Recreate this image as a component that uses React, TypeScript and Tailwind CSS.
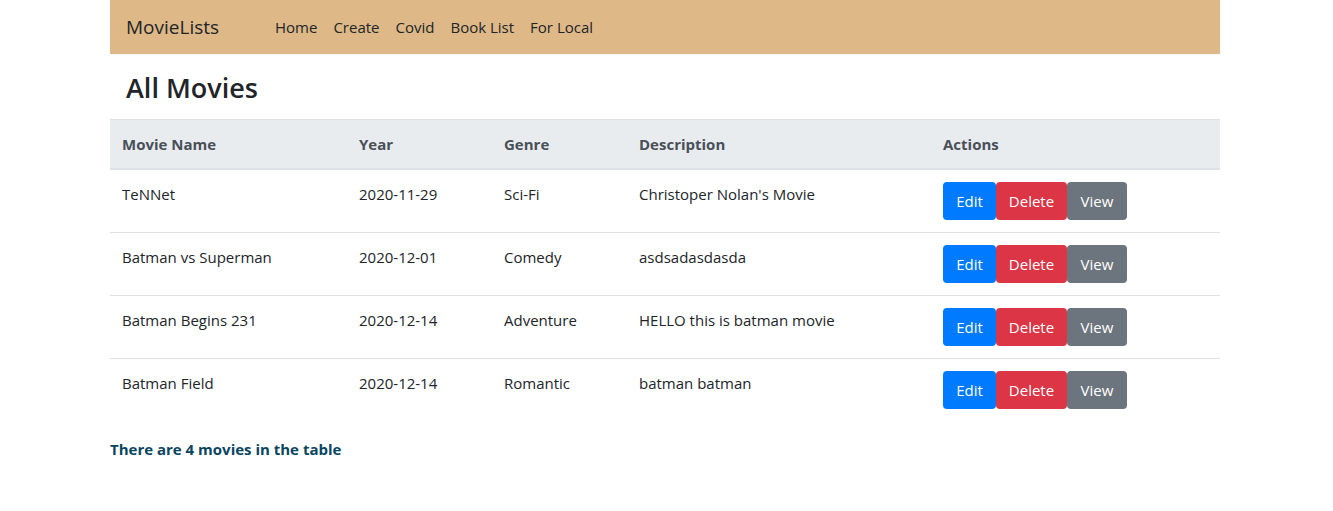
import React from "react";

const movies = [
  { name: "TeNNet", year: "2020-11-29", genre: "Sci-Fi", desc: "Christoper Nolan's Movie" },
  { name: "Batman vs Superman", year: "2020-12-01", genre: "Comedy", desc: "asdsadasdasda" },
  { name: "Batman Begins 231", year: "2020-12-14", genre: "Adventure", desc: "HELLO this is batman movie" },
  { name: "Batman Field", year: "2020-12-14", genre: "Romantic", desc: "batman batman" },
];

export default function App() {
  return (
    <div className="min-h-[511px] bg-white text-[#212529] text-[16px] leading-6" style={{ fontFamily: '"Open Sans", "Noto Sans", sans-serif' }}>
      <div className="ml-[110px] w-[1110px]">
        <nav className="flex h-[54px] items-center bg-[#deb887] px-4">
          <span className="text-[19px] leading-[28px] text-[#212529] w-[149px] -mt-[1px]">MovieLists</span>
          <div className="flex gap-4 text-[15px] text-[#212529] -mt-[1px]">
            <span>Home</span>
            <span>Create</span>
            <span>Covid</span>
            <span>Book List</span>
            <span>For Local</span>
          </div>
        </nav>
        <h2 className="px-4 pt-[15px] pb-[13px] text-[27px] leading-[37px] font-semibold">All Movies</h2>
        <table className="w-full border-collapse text-[15px]">
          <thead>
            <tr className="bg-[#e9ecef] text-[#495057]">
              <th className="w-[237px] border-t border-b-2 border-[#dee2e6] px-3 py-3 text-left font-bold">Movie Name</th>
              <th className="w-[145px] border-t border-b-2 border-[#dee2e6] px-3 py-3 text-left font-bold">Year</th>
              <th className="w-[135px] border-t border-b-2 border-[#dee2e6] px-3 py-3 text-left font-bold">Genre</th>
              <th className="w-[304px] border-t border-b-2 border-[#dee2e6] px-3 py-3 text-left font-bold">Description</th>
              <th className="border-t border-b-2 border-[#dee2e6] px-3 py-3 text-left font-bold">Actions</th>
            </tr>
          </thead>
          <tbody>
            {movies.map((m, i) => (
              <tr key={i} className={i < movies.length - 1 ? "border-b border-[#dee2e6]" : ""}>
                <td className="px-3 py-3 align-top">{m.name}</td>
                <td className="px-3 py-3 align-top">{m.year}</td>
                <td className="px-3 py-3 align-top">{m.genre}</td>
                <td className="px-3 py-3 align-top">{m.desc}</td>
                <td className="px-3 py-3 align-top">
                  <div className="flex text-[15px]">
                    <span className="flex h-[38px] w-[53px] items-center justify-center rounded bg-[#007bff] text-white">Edit</span>
                    <span className="flex h-[38px] w-[71px] items-center justify-center rounded bg-[#dc3545] text-white">Delete</span>
                    <span className="flex h-[38px] w-[60px] items-center justify-center rounded bg-[#6c757d] text-white">View</span>
                  </div>
                </td>
              </tr>
            ))}
          </tbody>
        </table>
        <p className="mt-[16px] text-[15px] font-bold text-[#0a4560]">There are 4 movies in the table</p>
      </div>
    </div>
  );
}
